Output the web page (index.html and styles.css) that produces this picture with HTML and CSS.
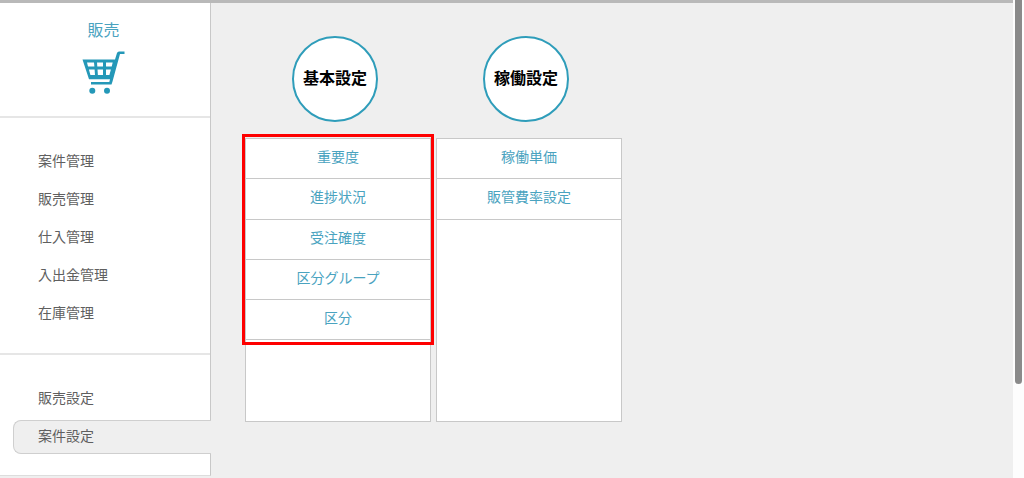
FILE: index.html
```html
<!DOCTYPE html>
<html lang="ja">
<head>
<meta charset="utf-8">
<title>案件設定</title>
<link rel="stylesheet" href="styles.css">
</head>
<body>
<div class="app">
  <aside class="sidebar">
    <div class="brand">
      <div class="brand-title">販売</div>
      <svg class="cart" width="44" height="44" viewBox="0 0 44 44">
        <path class="cart-fill" fill-rule="evenodd" d="M0.5 8.5H33L35 2Q35.5 0.5 37 0.5H42.5V3H38L30.5 30.5 29.5 33.5H9V31H27.3L28 28.2H7ZM5 11.5 6 15.5H12.4L12 11.5ZM15 11.5 15.3 15.5H21V11.5ZM24 11.5V15.5H29.7L30.7 11.5ZM6.9 18.5 8.4 24H13L12.6 18.5ZM15.5 18.5 15.9 24H21V18.5ZM24 18.5V24H27.4L28.9 18.5Z"/>
        <circle class="cart-fill" cx="10.3" cy="39.7" r="3"/>
        <circle class="cart-fill" cx="25" cy="39.7" r="3"/>
      </svg>
    </div>
    <nav class="menu menu-main">
      <a class="menu-item">案件管理</a>
      <a class="menu-item">販売管理</a>
      <a class="menu-item">仕入管理</a>
      <a class="menu-item">入出金管理</a>
      <a class="menu-item">在庫管理</a>
    </nav>
    <nav class="menu menu-settings">
      <a class="menu-item">販売設定</a>
      <a class="menu-item menu-item-active">案件設定</a>
    </nav>
  </aside>
  <main class="content">
    <section class="group">
      <div class="circle-wrap"><div class="circle">基本設定</div></div>
      <div class="panel">
        <a class="panel-row">重要度</a>
        <a class="panel-row">進捗状況</a>
        <a class="panel-row">受注確度</a>
        <a class="panel-row">区分グループ</a>
        <a class="panel-row">区分</a>
        <div class="highlight"></div>
      </div>
    </section>
    <section class="group">
      <div class="circle-wrap"><div class="circle">稼働設定</div></div>
      <div class="panel">
        <a class="panel-row">稼働単価</a>
        <a class="panel-row">販管費率設定</a>
      </div>
    </section>
  </main>
  <div class="scrollbar"><div class="scroll-thumb"></div></div>
</div>
</body>
</html>
```
FILE: styles.css
```css
* { box-sizing: border-box; }
html, body { margin: 0; height: 100%; overflow: hidden; }
body {
  font-family: "Noto Sans CJK JP", "Noto Sans", sans-serif;
  background: #efefef;
}
.app {
  display: flex;
  height: 478px;
  border-top: 3px solid #b9b9b9;
}
.sidebar {
  width: 211px;
  flex: none;
  background: #fff;
  border-right: 1px solid #c8c8c8;
  border-bottom: 1px solid #dddddd;
  height: 473px;
}
.brand {
  height: 115px;
  border-bottom: 2px solid #e6e6e6;
  display: flex;
  flex-direction: column;
  align-items: center;
  padding-top: 15px;
}
.brand-title {
  font-size: 16px;
  line-height: 22px;
  color: #4aa3bf;
  margin-right: 3px;
}
.cart { margin-top: 11px; margin-right: 3px; }
.cart-fill { fill: #2498b8; }
.menu { display: flex; flex-direction: column; }
.menu-main {
  height: 237px;
  padding-top: 23px;
  border-bottom: 2px solid #e6e6e6;
}
.menu-settings { padding-top: 23px; }
.menu-item {
  display: flex;
  align-items: center;
  height: 38px;
  padding-left: 38px;
  font-size: 14px;
  color: #5f5f5f;
}
.menu-settings .menu-item:first-child { margin-bottom: 4px; }
.menu-settings .menu-item-active {
  height: 34px;
  width: 198px;
  margin-left: 13px;
  margin-right: -1px;
  padding-left: 24px;
  padding-bottom: 5px;
  background: #efefef;
  border: 1px solid #cfcfcf;
  border-right: 0;
  border-radius: 8px 0 0 8px;
}
.content {
  display: flex;
  gap: 5px;
  padding-left: 34px;
  flex: 1;
}
.group { width: 186px; flex: none; }
.circle-wrap {
  height: 135px;
  padding-top: 33px;
  padding-left: 47px;
}
.circle {
  width: 86px;
  height: 86px;
  border-radius: 50%;
  background: #fff;
  border: 2px solid #2f9dba;
  display: flex;
  align-items: center;
  justify-content: center;
  padding-bottom: 5px;
  font-size: 16px;
  font-weight: 700;
  white-space: nowrap;
  color: #000;
}
.panel {
  position: relative;
  height: 284px;
  background: #fff;
  border: 1px solid #c8c8c8;
}
.panel-row {
  display: flex;
  align-items: center;
  justify-content: center;
  height: 40.3px;
  padding-bottom: 5px;
  border-bottom: 1px solid #c8c8c8;
  font-size: 14px;
  color: #4aa3bf;
}
.highlight {
  position: absolute;
  left: -4px;
  top: -5px;
  width: 192px;
  height: 211px;
  border: 3px solid #fe0000;
}
.scrollbar {
  position: absolute;
  top: 0;
  right: 0;
  width: 11px;
  height: 478px;
  background: #fdfdfd;
}
.scroll-thumb {
  width: 7px;
  height: 384px;
  margin-left: 2px;
  background: #8a8a8a;
  border-radius: 0 0 4px 4px;
}
```
